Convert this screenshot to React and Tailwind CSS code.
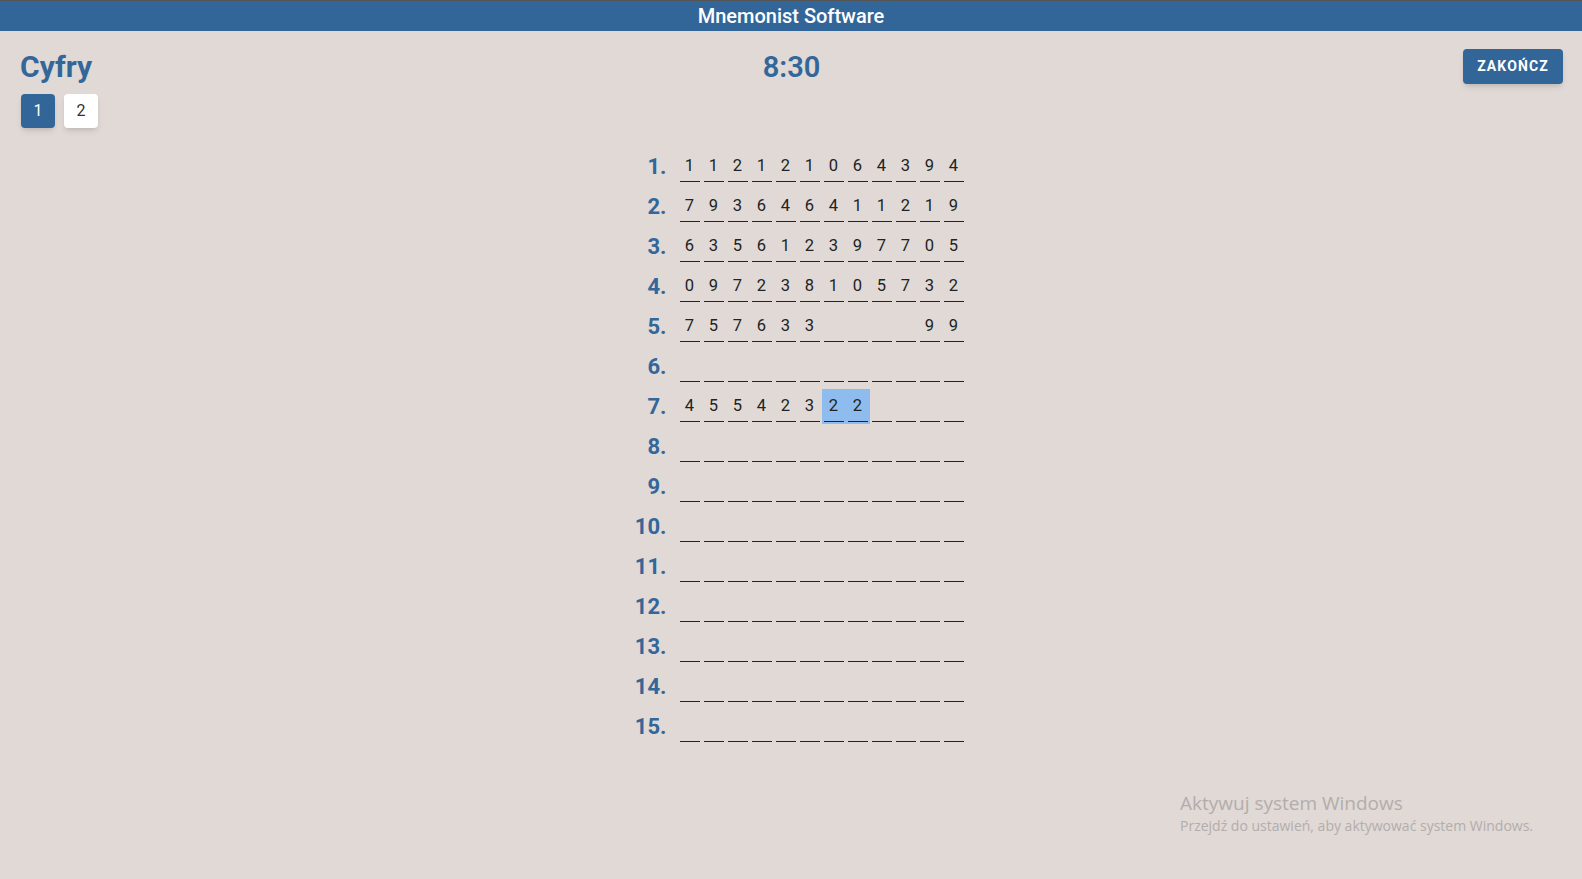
import React from "react";

const rows = [
  "112121064394",
  "793646411219",
  "635612397705",
  "097238105732",
  "757633    99",
  "            ",
  "45542322    ",
  "            ",
  "            ",
  "            ",
  "            ",
  "            ",
  "            ",
  "            ",
  "            ",
];

// highlighted cells: [row, col]
const marked = { "6-6": true, "6-7": true };

function Cell({ value, active }) {
  return (
    <div
      className={
        "w-[24px] h-[35px] flex items-end justify-center pb-[2px] " +
        (active ? "bg-[#8ebcee]" : "")
      }
    >
      <span className="w-[20px] border-b border-[#222] text-center text-[16.5px] leading-[24px] pb-[3px] text-[#222]">
        {value.trim() ? value : "\u00a0"}
      </span>
    </div>
  );
}

function App() {
  return (
    <div
      className="relative min-h-screen w-full bg-[#e0d9d6] overflow-hidden"
      style={{ fontFamily: "Roboto, 'Liberation Sans', sans-serif" }}
    >
      {/* Top bar */}
      <header className="h-[31px] border-t border-[#555] bg-[#326699] flex items-center justify-center">
        <span className="text-white text-[20px] font-medium">Mnemonist Software</span>
      </header>

      {/* Title / timer / finish */}
      <div className="grid grid-cols-3 items-start pl-[20px] pr-[19px] pt-[17px]">
        <div>
          <h1 className="text-[30px] leading-[38px] font-bold text-[#336699]">Cyfry</h1>
          <div className="ml-[1px] mt-[8px] flex gap-[9px]">
            <button className="w-[34px] h-[34px] rounded-[4px] bg-[#326699] text-white text-[16px] shadow-md">
              1
            </button>
            <button className="w-[34px] h-[34px] rounded-[4px] bg-white text-[#333] text-[16px] shadow-md">
              2
            </button>
          </div>
        </div>
        <div className="pt-[1px] text-center text-[29px] leading-[36px] font-semibold text-[#336699]">8:30</div>
        <div className="flex justify-end pt-[1px]">
          <button className="w-[100px] h-[35px] rounded-[4px] bg-[#326699] text-white text-[14px] font-bold tracking-[0.08em] shadow-md">
            ZAKOŃCZ
          </button>
        </div>
      </div>

      {/* Digit rows */}
      <div className="mt-[21px] flex justify-center pl-[10px]">
        <div className="flex flex-col gap-[5px]">
          {rows.map((r, i) => (
            <div key={i} className="flex gap-[11px]">
              <div className="w-[40px] text-right text-[22px] leading-[35px] font-bold text-[#336699]">
                {i + 1}.
              </div>
              <div className="flex">
                {r.split("").map((d, j) => (
                  <Cell key={j} value={d} active={marked[i + "-" + j]} />
                ))}
              </div>
            </div>
          ))}
        </div>
      </div>

      {/* Windows activation watermark */}
      <div
        className="absolute left-[1180px] top-[790px] text-[#b3adab]"
        style={{ fontFamily: "'Open Sans', 'Noto Sans', sans-serif" }}
      >
        <div className="text-[19px] leading-[26px]">Aktywuj system Windows</div>
        <div className="text-[14px] leading-[20px]">Przejdź do ustawień, aby aktywować system Windows.</div>
      </div>
    </div>
  );
}

export default App;
